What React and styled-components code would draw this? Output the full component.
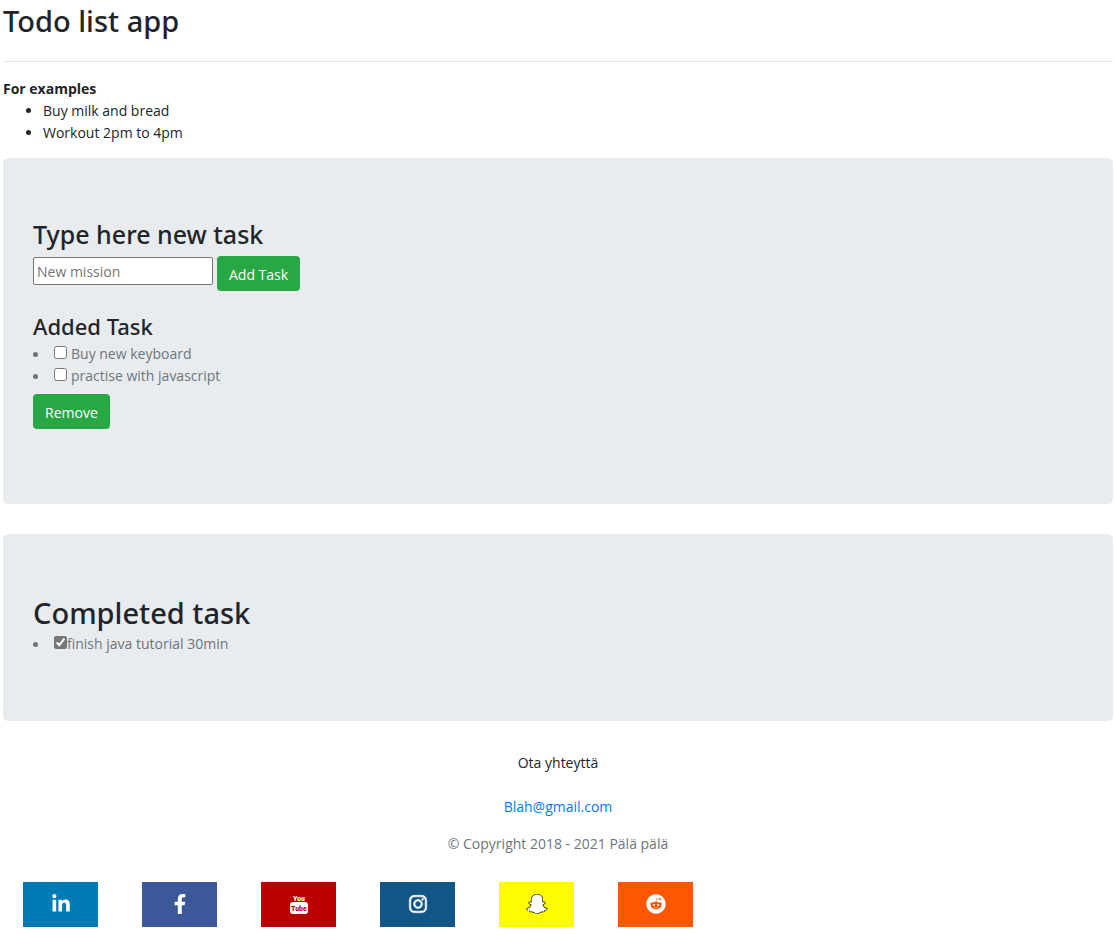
import React, { useState } from "react";
import styled, { createGlobalStyle } from "styled-components";
import { FaLinkedinIn, FaFacebookF, FaInstagram, FaSnapchatGhost, FaReddit } from "react-icons/fa";

const GlobalStyle = createGlobalStyle`
  *, *::before, *::after { box-sizing: border-box; }
  body {
    margin: 0;
    background: #fff;
    color: #212529;
    font-family: "Segoe UI", "Open Sans", "Noto Sans", sans-serif;
    font-size: 14px;
    line-height: 22px;
  }
`;

const Page = styled.div`
  padding: 3px 2px 7px 3px;
`;

const Heading = styled.h1`
  margin: 0 0 ${(p) => p.$gap}px;
  font-family: "Segoe UI", "Noto Sans", sans-serif;
  font-size: ${(p) => p.$size}px;
  line-height: ${(p) => p.$line}px;
  font-weight: 500;
`;

const Divider = styled.hr`
  margin: 0 0 16px;
  border: 0;
  border-top: 1px solid #e5e5e5;
`;

const ExampleTitle = styled.strong`
  display: block;
  font-weight: 700;
`;

const ExampleList = styled.ul`
  margin: 0 0 14px;
  padding-left: 40px;
`;

const Panel = styled.section`
  margin-bottom: 30px;
  padding: 60px 30px;
  border-radius: 5px;
  background: #e9ecef;
`;

const TaskForm = styled.form`
  display: flex;
  align-items: flex-start;
  gap: 4px;
  margin-bottom: 21px;
`;

const TaskInput = styled.input`
  width: 180px;
  height: 28px;
  margin-top: 1px;
  padding: 1px 3px;
  border: 1px solid #767676;
  border-radius: 2px;
  background: #fff;
  color: #212529;
  font: inherit;
  &::placeholder { color: #757575; opacity: 1; }
`;

const Button = styled.button`
  height: 35px;
  padding: 2px 12px 0;
  border: 0;
  border-radius: 4px;
  background: #28a745;
  color: #fff;
  font: inherit;
  cursor: pointer;
`;

const TaskList = styled.ul`
  margin: 0 0 ${(p) => p.$gap}px;
  padding: 0;
  list-style: none;
  color: #6c757d;
`;

const TaskItem = styled.li`
  display: flex;
  align-items: center;
  &::before {
    content: "";
    width: 5px;
    height: 5px;
    margin-right: 16px;
    border-radius: 50%;
    background: #6c757d;
  }
`;

const TaskLabel = styled.label`
  display: flex;
  align-items: center;
  gap: ${(p) => p.$gap}px;
`;

const Checkbox = styled.input`
  width: 13px;
  height: 13px;
  margin: 0 0 4px;
  accent-color: #767676;
`;

const Contact = styled.footer`
  padding-top: 1px;
  text-align: center;
`;

const Line = styled.p`
  margin: 0 0 ${(p) => p.$gap}px;
  color: ${(p) => (p.$muted ? "#6c757d" : "inherit")};
`;

const MailLink = styled.a`
  color: #007bff;
  text-decoration: none;
`;

const SocialBar = styled.nav`
  display: flex;
  flex-wrap: wrap;
  gap: 44px;
  padding: 0 20px;
`;

const SocialLink = styled.a`
  display: flex;
  align-items: center;
  justify-content: center;
  width: 75px;
  height: 45px;
  padding-bottom: 1px;
  background: ${(p) => p.$color};
  color: #fff;
  font-size: 20px;
`;

const Ghost = styled(FaSnapchatGhost)`
  overflow: visible;
  stroke: #000;
  stroke-width: 32px;
  paint-order: stroke;
`;

const Camera = styled(FaInstagram)`
  stroke: #fff;
  stroke-width: 12px;
`;

const LogoText = styled.text`
  font-family: "Roboto Condensed", "Liberation Sans Narrow", "Liberation Sans", sans-serif;
  font-size: 8px;
  font-weight: 700;
  text-anchor: middle;
`;

function YouTubeLogo() {
  return (
    <svg width="18" height="22" viewBox="0 0 18 22" aria-hidden="true">
      <LogoText x="9" y="8" fill="#fff">You</LogoText>
      <rect x="0" y="9" width="18" height="12" rx="3" fill="#fff" />
      <LogoText x="9" y="18" fill="#bb0000">Tube</LogoText>
    </svg>
  );
}

const socials = [
  { name: "LinkedIn", color: "#007bb5", Icon: FaLinkedinIn },
  { name: "Facebook", color: "#3b5998", Icon: FaFacebookF },
  { name: "YouTube", color: "#bb0000", Icon: YouTubeLogo },
  { name: "Instagram", color: "#125688", Icon: Camera },
  { name: "Snapchat", color: "#fffc00", Icon: Ghost },
  { name: "Reddit", color: "#ff5700", Icon: FaReddit },
];

function Task({ text, gap = 4, done = false }) {
  return (
    <TaskItem>
      <TaskLabel $gap={gap}>
        <Checkbox type="checkbox" defaultChecked={done} />
        {text}
      </TaskLabel>
    </TaskItem>
  );
}

export default function App() {
  const [draft, setDraft] = useState("");
  return (
    <>
      <GlobalStyle />
      <Page>
        <Heading $size={29} $line={36} $gap={22}>Todo list app</Heading>
        <Divider />
        <ExampleTitle>For examples</ExampleTitle>
        <ExampleList>
          <li>Buy milk and bread</li>
          <li>Workout 2pm to 4pm</li>
        </ExampleList>
        <main>
          <Panel>
            <Heading as="h2" $size={25} $line={32} $gap={6}>Type here new task</Heading>
            <TaskForm onSubmit={(e) => e.preventDefault()}>
              <TaskInput
                aria-label="New mission"
                placeholder="New mission"
                value={draft}
                onChange={(e) => setDraft(e.target.value)}
              />
              <Button type="submit">Add Task</Button>
            </TaskForm>
            <Heading as="h3" $size={22} $line={28} $gap={3}>Added Task</Heading>
            <TaskList $gap={7}>
              <Task text="Buy new keyboard" />
              <Task text="practise with javascript" />
            </TaskList>
            <Button type="button">Remove</Button>
            <Line $gap={15} />
          </Panel>
          <Panel>
            <Heading as="h2" $size={29} $line={38} $gap={1}>Completed task</Heading>
            <TaskList $gap={6}>
              <Task text="finish java tutorial 30min" gap={0} done />
            </TaskList>
          </Panel>
        </main>
        <Contact>
          <Line $gap={22}>Ota yhteyttä</Line>
          <Line $gap={15}>
            <MailLink href="mailto:Blah@gmail.com">Blah@gmail.com</MailLink>
          </Line>
          <Line $gap={27} $muted>© Copyright 2018 - 2021 Pälä pälä</Line>
        </Contact>
        <SocialBar>
          {socials.map(({ name, color, Icon }) => (
            <SocialLink key={name} href="#" aria-label={name} $color={color}>
              <Icon />
            </SocialLink>
          ))}
        </SocialBar>
      </Page>
    </>
  );
}
